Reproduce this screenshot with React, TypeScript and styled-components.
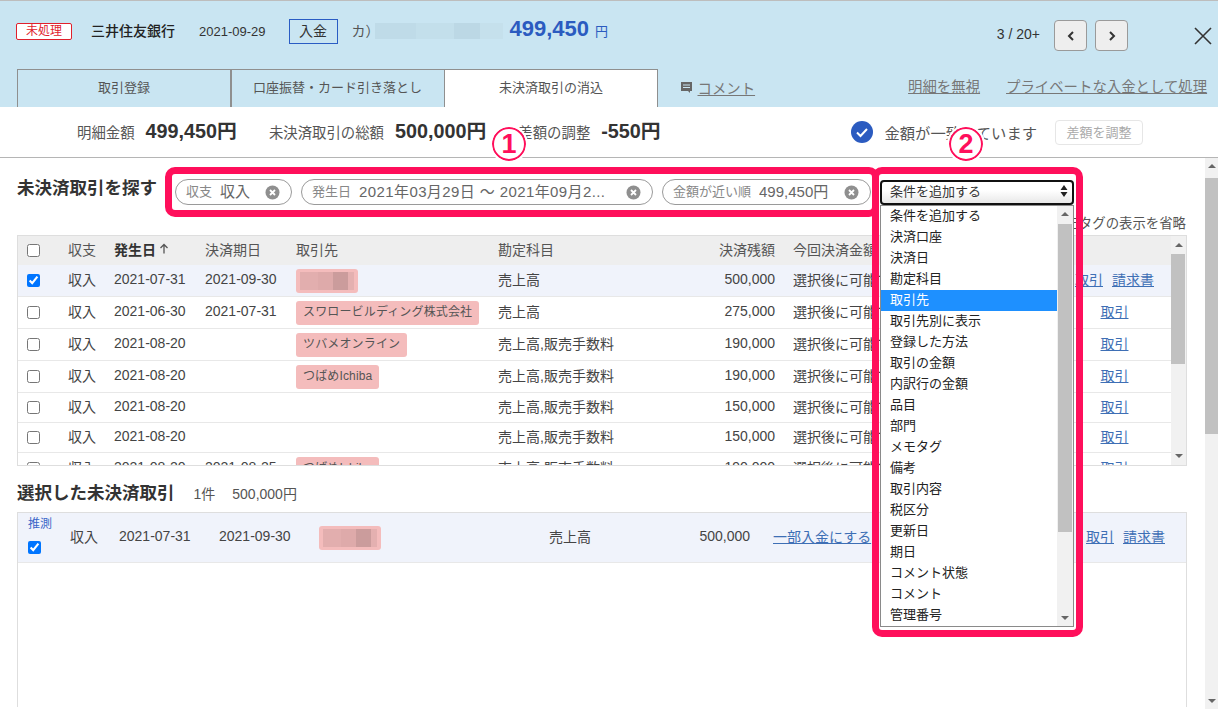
import styled, { createGlobalStyle } from 'styled-components';

const GlobalStyle = createGlobalStyle`
	html, body {
		margin: 0;
		padding: 0;
		background: #ffffff;
	}
	body {
		font-family: 'Liberation Sans', 'Noto Sans CJK JP', sans-serif;
		font-size: 13px;
		color: #444444;
	}
`;

const Page = styled.div`
	position: relative;
	width: 1218px;
	height: 709px;
	overflow: hidden;
	display: flex;
	flex-direction: column;
`;

const Header = styled.header`
	height: 107px;
	flex: none;
	box-sizing: border-box;
	border-top: 1px solid #bdbdbd;
	background: #c9e5f2;
	display: flex;
	flex-direction: column;
	justify-content: space-between;
`;

const InfoRow = styled.div`
	display: flex;
	align-items: center;
	height: 26px;
	margin-top: 17px;
	padding-left: 16px;
	color: #333333;
`;

const StatusBadge = styled.span`
	width: 56px;
	height: 17px;
	margin-top: 1px;
	box-sizing: border-box;
	border: 1px solid #e0202c;
	border-radius: 2px;
	background: #ffffff;
	color: #e0202c;
	font-size: 12px;
	line-height: 14px;
	text-align: center;
`;

const BankName = styled.span`
	margin-left: 19px;
	margin-bottom: 2px;
	font-size: 14px;
	font-weight: 500;
	color: #222222;
`;

const DateText = styled.span`
	margin-left: 24px;
	font-size: 13px;
`;

const TypeBox = styled.span`
	margin-left: 23px;
	width: 49px;
	height: 25px;
	box-sizing: border-box;
	border: 1px solid #2a5cc4;
	font-size: 14px;
	line-height: 22px;
	text-align: center;
`;

const Payer = styled.span`
	margin-left: 14px;
	margin-bottom: 2px;
	width: 23px;
	font-size: 14px;
	color: #555555;
`;

const PayerBlur = styled.span`
	width: 128px;
	height: 16px;
	background: linear-gradient(90deg, #bfdbe8 0 32%, #c3dfeb 32% 62%, #bcd8e5 62% 82%, #c5e0ec 82%);
`;

const Amount = styled.span`
	margin-left: 7px;
	margin-bottom: 4px;
	font-size: 22px;
	font-weight: 700;
	color: #2b5bc0;
`;

const AmountUnit = styled.span`
	margin-left: 6px;
	margin-bottom: 2px;
	font-size: 13px;
	color: #2b5bc0;
`;

const Pager = styled.div`
	margin-left: auto;
	align-self: flex-start;
	margin-top: 2px;
	display: flex;
	align-items: center;
	gap: 8px;
	padding-right: 4px;
`;

const PagerText = styled.span`
	margin-right: 6px;
	margin-bottom: 3px;
	font-size: 14px;
	color: #333333;
`;

const PagerButton = styled.button`
	width: 33px;
	height: 31px;
	padding: 0;
	display: flex;
	align-items: center;
	justify-content: center;
	border: 1px solid #9a9a9a;
	border-radius: 4px;
	background: #eeeeee;
`;

const CloseButton = styled.button`
	width: 22px;
	height: 22px;
	margin-left: 56px;
	margin-top: 1px;
	padding: 0;
	border: none;
	background: transparent;
	display: flex;
	align-items: center;
	justify-content: center;
`;

const TabRow = styled.div`
	display: flex;
	align-items: flex-start;
	height: 38px;
	padding-left: 17px;
`;

const Tab = styled.div<{ $active?: boolean }>`
	width: 214px;
	height: 38px;
	box-sizing: border-box;
	margin-right: -0.5px;
	border: 1px solid #8f8f8f;
	border-bottom: none;
	background: ${(props) => (props.$active ? '#ffffff' : 'transparent')};
	color: #555555;
	font-size: 13px;
	line-height: 36px;
	text-align: center;
`;

const CommentLink = styled.span`
	margin-left: 23px;
	height: 36px;
	display: flex;
	align-items: center;
	gap: 6px;
	font-size: 14.4px;
	color: #777777;
`;

const HeaderLink = styled.a<{ $left: number }>`
	margin-left: ${(props) => props.$left}px;
	height: 36px;
	line-height: 36px;
	font-size: 14.4px;
	color: #777777;
	text-decoration: underline;
	white-space: nowrap;
`;

const SummaryBar = styled.div`
	height: 50px;
	flex: none;
	border-bottom: 1px solid #b5b5b5;
	display: flex;
	align-items: center;
	padding-left: 77px;
`;

const SummaryLabel = styled.span<{ $left?: number }>`
	margin-left: ${(props) => props.$left ?? 0}px;
	margin-bottom: 2px;
	font-size: 14.4px;
	color: #555555;
`;

const SummaryValue = styled.span`
	margin-left: 11px;
	margin-bottom: 6px;
	font-size: 19.8px;
	font-weight: 700;
	color: #333333;
`;

const MatchStatus = styled.div`
	margin-left: auto;
	display: flex;
	align-items: center;
	padding-right: 75px;
`;

const MatchText = styled.span`
	margin-left: 11px;
	font-size: 15.3px;
	color: #555555;
`;

const AdjustButton = styled.button`
	width: 88px;
	height: 25px;
	margin-left: 18px;
	padding: 0 0 2px;
	border: 1px solid #e6e6e6;
	border-radius: 4px;
	background: #ffffff;
	color: #aaaaaa;
	font-family: inherit;
	font-size: 13px;
`;

const Body = styled.div`
	flex: 1;
	min-height: 0;
	display: flex;
`;

const Content = styled.main`
	width: 1170px;
	margin-left: 17px;
	display: flex;
	flex-direction: column;
`;

const PageScrollbar = styled.div`
	position: relative;
	width: 13px;
	margin-left: 18px;
	background: #f1f1f1;
`;

const PageThumb = styled.div`
	position: absolute;
	top: 20px;
	left: 0;
	right: 0;
	height: 256px;
	background: #c1c1c1;
`;

const SearchRow = styled.div`
	display: flex;
	align-items: flex-start;
	margin-top: 21px;
	height: 26px;
`;

const SectionTitle = styled.h2`
	margin: 0;
	font-size: 17.5px;
	font-weight: 700;
	line-height: 18px;
	color: #333333;
	white-space: nowrap;
`;

const ChipList = styled.div`
	display: flex;
	gap: 9px;
	margin-left: 18px;
`;

const Chip = styled.div<{ $width: number }>`
	width: ${(props) => props.$width}px;
	height: 26px;
	box-sizing: border-box;
	padding: 0 11px 0 10px;
	display: flex;
	align-items: center;
	border: 1px solid #9a9a9a;
	border-radius: 13px;
	background: #ffffff;
	white-space: nowrap;
`;

const ChipLabel = styled.span`
	margin-bottom: 3px;
	font-size: 13px;
	color: #888888;
`;

const ChipValue = styled.span<{ $spacing?: number }>`
	margin-left: 8px;
	margin-bottom: 3px;
	flex: 1;
	font-size: 15px;
	letter-spacing: ${(props) => props.$spacing ?? 0}px;
	color: #666666;
	overflow: hidden;
`;

const OptionRow = styled.div`
	height: 21px;
	margin-top: 9px;
	padding: 0 1px 0 0;
	display: flex;
	justify-content: flex-end;
	font-size: 13.4px;
	line-height: 19px;
	color: #555555;
`;

const TableFrame = styled.section`
	position: relative;
	height: 231px;
	flex: none;
	box-sizing: border-box;
	border: 1px solid #dedede;
	font-size: 14px;
	overflow: hidden;
`;

const gridColumns = '50px 46px 91px 91px 202px 170px 107px 1fr 111px';

const HeadRow = styled.div`
	height: 29px;
	padding-right: 15px;
	display: grid;
	grid-template-columns: ${gridColumns};
	align-items: center;
	background: #eeeeee;
	color: #555555;
`;

const Row = styled.div<{ $selected?: boolean; $compact?: boolean }>`
	height: ${(props) => (props.$compact ? 29 : 31)}px;
	padding-right: 15px;
	display: grid;
	grid-template-columns: ${gridColumns};
	align-items: center;
	border-bottom: 1px solid #e8e8e8;
	background: ${(props) => (props.$selected ? '#f0f3fb' : '#ffffff')};
	color: #444444;
	white-space: nowrap;
`;

const Cell = styled.span`
	padding-bottom: 4px;
`;

const CheckCell = styled.div`
	padding-left: 9px;
	display: flex;
	align-items: center;
`;

const Check = styled.input.attrs({ type: 'checkbox', readOnly: true })`
	width: 13px;
	height: 13px;
	margin: 0;
`;

const SortedHead = styled(Cell)`
	display: flex;
	align-items: center;
	gap: 3px;
	font-weight: 700;
	color: #333333;
`;

const NumberCell = styled(Cell)`
	text-align: right;
`;

const PendingCell = styled(Cell)`
	padding-left: 18px;
`;

const LinkCell = styled(Cell)`
	display: flex;
	justify-content: center;
	gap: 9px;
	padding-right: 2px;
`;

const RowLink = styled.a`
	font-size: 14px;
	color: #3e6fb5;
	text-decoration: underline;
`;

const PartnerChip = styled.span`
	display: inline-block;
	padding: 0 7px;
	height: 24px;
	line-height: 22px;
	border-radius: 3px;
	background: #f4bcbc;
	color: #555555;
	font-size: 12px;
	letter-spacing: 0.15px;
`;

const BlurChip = styled.span<{ $width: number }>`
	display: block;
	width: ${(props) => props.$width}px;
	height: 24px;
	box-sizing: border-box;
	padding: 3px 4px;
	border-radius: 3px;
	background: #f4bcbc;
`;

const BlurFill = styled.span`
	display: block;
	height: 100%;
	background: linear-gradient(90deg, #e2aeae 0 34%, #deaaaa 34% 62%, #cb9c9c 62% 88%, #e4b0b0 88%);
`;

const TableScrollbar = styled.div`
	position: absolute;
	top: 0;
	right: 0;
	bottom: 0;
	width: 15px;
	background: #f1f1f1;
`;

const TableThumb = styled.div`
	position: absolute;
	top: 18px;
	left: 0;
	right: 1px;
	height: 110px;
	background: #c1c1c1;
`;

const ArrowMark = styled.div<{ $down?: boolean; $offset: number }>`
	position: absolute;
	left: 50%;
	margin-left: -4px;
	${(props) => (props.$down ? 'bottom' : 'top')}: ${(props) => props.$offset}px;
	width: 0;
	height: 0;
	border-left: 4px solid transparent;
	border-right: 4px solid transparent;
	${(props) => (props.$down ? 'border-top' : 'border-bottom')}: 4px solid #666666;
`;

const SelectedHeading = styled.div`
	display: flex;
	align-items: baseline;
	height: 20px;
	margin-top: 17px;
`;

const SelectedMeta = styled.span<{ $left: number }>`
	margin-left: ${(props) => props.$left}px;
	font-size: 14px;
	color: #555555;
`;

const SelectedFrame = styled.section`
	flex: 1;
	margin-top: 9px;
	margin-bottom: 2px;
	border: 1px solid #dedede;
	border-bottom: none;
	font-size: 14px;
`;

const SelectedRow = styled.div`
	height: 49px;
	display: grid;
	grid-template-columns: 52px 49px 100px 100px 230px 90px 111px 1fr 111px;
	align-items: center;
	border-bottom: 1px solid #e8e8e8;
	background: #f0f3fb;
	color: #444444;
	white-space: nowrap;
`;

const GuessCell = styled.div`
	padding: 0 0 4px 10px;
	display: flex;
	flex-direction: column;
	gap: 10px;
	align-items: flex-start;
`;

const GuessLabel = styled.span`
	font-size: 12px;
	line-height: 14px;
	color: #3b66c8;
`;

const PartialCell = styled(Cell)`
	padding-left: 23px;
`;

const SelectedLinks = styled(Cell)`
	display: flex;
	gap: 9px;
	justify-content: flex-end;
	padding-right: 21px;
`;

/* annotation overlays drawn on top of the screenshot */
const Callout = styled.div<{ $left: number; $width: number; $height: number }>`
	position: absolute;
	left: ${(props) => props.$left}px;
	top: 167px;
	width: ${(props) => props.$width}px;
	height: ${(props) => props.$height}px;
	box-sizing: border-box;
	border: 7px solid #ff0f5b;
	border-radius: 10px;
	pointer-events: none;
`;

const Marker = styled.div<{ $left: number }>`
	position: absolute;
	left: ${(props) => props.$left}px;
	top: 127px;
	width: 34px;
	height: 34px;
	box-sizing: border-box;
	border: 2px solid #ff0f5b;
	border-radius: 50%;
	outline: 2px solid #ffffff;
	background: #ffffff;
	color: #ff0f5b;
	font-size: 27px;
	font-weight: 700;
	line-height: 30px;
	text-align: center;
`;

const SelectBox = styled.div`
	position: absolute;
	left: 880px;
	top: 180px;
	width: 194px;
	height: 25px;
	box-sizing: border-box;
	padding: 0 4px 4px 8px;
	display: flex;
	align-items: center;
	justify-content: space-between;
	border: 2px solid #111111;
	border-radius: 4px;
	background: linear-gradient(#ffffff 40%, #e8e8e8);
	color: #333333;
`;

const OptionList = styled.div`
	position: absolute;
	left: 880px;
	top: 205px;
	width: 194px;
	height: 422px;
	box-sizing: border-box;
	border: 1px solid #8a8a8a;
	background: #ffffff;
	overflow: hidden;
`;

const OptionItem = styled.div<{ $active?: boolean }>`
	width: 176px;
	height: 21px;
	padding-left: 9px;
	box-sizing: border-box;
	background: ${(props) => (props.$active ? '#1e90ff' : 'transparent')};
	color: ${(props) => (props.$active ? '#ffffff' : '#222222')};
	line-height: 20px;
`;

const ListScrollbar = styled.div`
	position: absolute;
	top: 0;
	right: 0;
	bottom: 0;
	width: 16px;
	background: #f1f1f1;
`;

const ListThumb = styled.div`
	position: absolute;
	top: 18px;
	left: 1px;
	right: 1px;
	height: 308px;
	background: #c1c1c1;
`;

type Deal = {
	issued: string;
	due?: string;
	partner?: string;
	blur?: boolean;
	account: string;
	balance: string;
	invoice?: boolean;
	checked?: boolean;
};

const deals: Deal[] = [
	{ issued: '2021-07-31', due: '2021-09-30', blur: true, account: '売上高', balance: '500,000', invoice: true, checked: true },
	{ issued: '2021-06-30', due: '2021-07-31', partner: 'スワロービルディング株式会社', account: '売上高', balance: '275,000' },
	{ issued: '2021-08-20', partner: 'ツバメオンライン', account: '売上高,販売手数料', balance: '190,000' },
	{ issued: '2021-08-20', partner: 'つばめIchiba', account: '売上高,販売手数料', balance: '190,000' },
	{ issued: '2021-08-20', account: '売上高,販売手数料', balance: '150,000' },
	{ issued: '2021-08-20', account: '売上高,販売手数料', balance: '150,000' },
	{ issued: '2021-08-20', due: '2021-08-25', partner: 'つばめIchiba', account: '売上高,販売手数料', balance: '190,000' },
];

const conditions = ['条件を追加する', '決済口座', '決済日', '勘定科目', '取引先', '取引先別に表示', '登録した方法', '取引の金額', '内訳行の金額', '品目', '部門', 'メモタグ', '備考', '取引内容', '税区分', '更新日', '期日', 'コメント状態', 'コメント', '管理番号'];

const ClearIcon = () => (
	<svg width='15' height='15' viewBox='0 0 15 15'>
		<circle cx='7.5' cy='7.5' r='7' fill='#8f8f8f' />
		<path d='M5 5l5 5M10 5l-5 5' stroke='#ffffff' strokeWidth='1.8' />
	</svg>
);

const Chevron = ({ left }: { left?: boolean }) => (
	<svg width='10' height='12' viewBox='0 0 10 12'>
		<path d={left ? 'M7 2L3 6l4 4' : 'M3 2l4 4-4 4'} fill='none' stroke='#333333' strokeWidth='2' />
	</svg>
);

export default function App() {
	return (
		<Page>
			<GlobalStyle />
			<Header>
				<InfoRow>
					<StatusBadge>未処理</StatusBadge>
					<BankName>三井住友銀行</BankName>
					<DateText>2021-09-29</DateText>
					<TypeBox>入金</TypeBox>
					<Payer>カ）</Payer>
					<PayerBlur />
					<Amount>499,450</Amount>
					<AmountUnit>円</AmountUnit>
					<Pager>
						<PagerText>3 / 20+</PagerText>
						<PagerButton>
							<Chevron left />
						</PagerButton>
						<PagerButton>
							<Chevron />
						</PagerButton>
						<CloseButton>
							<svg width='20' height='20' viewBox='0 0 20 20'>
								<path d='M2 2l16 16M18 2L2 18' stroke='#333333' strokeWidth='1.6' />
							</svg>
						</CloseButton>
					</Pager>
				</InfoRow>
				<TabRow>
					<Tab>取引登録</Tab>
					<Tab>口座振替・カード引き落とし</Tab>
					<Tab $active>未決済取引の消込</Tab>
					<CommentLink>
						<svg width='11' height='11' viewBox='0 0 11 11'>
							<path d='M0 0h11v9H9v2L7 9H0z' fill='#666666' />
							<path d='M2 3h7M2 5.5h7' stroke='#c9e5f2' strokeWidth='1' />
						</svg>
						<u>コメント</u>
					</CommentLink>
					<HeaderLink $left={153}>明細を無視</HeaderLink>
					<HeaderLink $left={26}>プライベートな入金として処理</HeaderLink>
				</TabRow>
			</Header>
			<SummaryBar>
				<SummaryLabel>明細金額</SummaryLabel>
				<SummaryValue>499,450円</SummaryValue>
				<SummaryLabel $left={32}>未決済取引の総額</SummaryLabel>
				<SummaryValue>500,000円</SummaryValue>
				<SummaryLabel $left={32}>差額の調整</SummaryLabel>
				<SummaryValue>-550円</SummaryValue>
				<MatchStatus>
					<svg width='22' height='22' viewBox='0 0 22 22'>
						<circle cx='11' cy='11' r='11' fill='#2b5bc0' />
						<path d='M6 11.5l3.5 3.5L16 8' fill='none' stroke='#ffffff' strokeWidth='2' />
					</svg>
					<MatchText>金額が一致しています</MatchText>
					<AdjustButton>差額を調整</AdjustButton>
				</MatchStatus>
			</SummaryBar>
			<Body>
				<Content>
					<SearchRow>
						<SectionTitle>未決済取引を探す</SectionTitle>
						<ChipList>
							<Chip $width={117}>
								<ChipLabel>収支</ChipLabel>
								<ChipValue>収入</ChipValue>
								<ClearIcon />
							</Chip>
							<Chip $width={352}>
								<ChipLabel>発生日</ChipLabel>
								<ChipValue $spacing={0.4}>2021年03月29日 ～ 2021年09月2...</ChipValue>
								<ClearIcon />
							</Chip>
							<Chip $width={209}>
								<ChipLabel>金額が近い順</ChipLabel>
								<ChipValue>499,450円</ChipValue>
								<ClearIcon />
							</Chip>
						</ChipList>
					</SearchRow>
					<OptionRow>メモタグの表示を省略</OptionRow>
					<TableFrame>
						<HeadRow>
							<CheckCell>
								<Check />
							</CheckCell>
							<Cell>収支</Cell>
							<SortedHead>
								発生日
								<svg width='10' height='11' viewBox='0 0 10 11'>
									<path d='M5 10.5V1.5M1.5 5L5 1.5 8.5 5' fill='none' stroke='#555555' strokeWidth='1.3' />
								</svg>
							</SortedHead>
							<Cell>決済期日</Cell>
							<Cell>取引先</Cell>
							<Cell>勘定科目</Cell>
							<NumberCell>決済残額</NumberCell>
							<PendingCell>今回決済金額</PendingCell>
							<span />
						</HeadRow>
						{deals.map((deal, index) => (
							<Row key={index} $selected={deal.checked} $compact={!deal.partner && !deal.blur}>
								<CheckCell>
									<Check defaultChecked={deal.checked} />
								</CheckCell>
								<Cell>収入</Cell>
								<Cell>{deal.issued}</Cell>
								<Cell>{deal.due}</Cell>
								<div>
									{deal.blur ? (
										<BlurChip $width={62}>
											<BlurFill />
										</BlurChip>
									) : (
										deal.partner && <PartnerChip>{deal.partner}</PartnerChip>
									)}
								</div>
								<Cell>{deal.account}</Cell>
								<NumberCell>{deal.balance}</NumberCell>
								<PendingCell>選択後に可能です</PendingCell>
								<LinkCell>
									<RowLink>取引</RowLink>
									{deal.invoice && <RowLink>請求書</RowLink>}
								</LinkCell>
							</Row>
						))}
						<TableScrollbar>
							<ArrowMark $offset={7} />
							<TableThumb />
							<ArrowMark $down $offset={7} />
						</TableScrollbar>
					</TableFrame>
					<SelectedHeading>
						<SectionTitle>選択した未決済取引</SectionTitle>
						<SelectedMeta $left={19}>1件</SelectedMeta>
						<SelectedMeta $left={17}>500,000円</SelectedMeta>
					</SelectedHeading>
					<SelectedFrame>
						<SelectedRow>
							<GuessCell>
								<GuessLabel>推測</GuessLabel>
								<Check defaultChecked />
							</GuessCell>
							<Cell>収入</Cell>
							<Cell>2021-07-31</Cell>
							<Cell>2021-09-30</Cell>
							<div>
								<BlurChip $width={62}>
									<BlurFill />
								</BlurChip>
							</div>
							<Cell>売上高</Cell>
							<NumberCell>500,000</NumberCell>
							<PartialCell>
								<RowLink>一部入金にする</RowLink>
							</PartialCell>
							<SelectedLinks>
								<RowLink>取引</RowLink>
								<RowLink>請求書</RowLink>
							</SelectedLinks>
						</SelectedRow>
					</SelectedFrame>
				</Content>
				<PageScrollbar>
					<ArrowMark $offset={6} />
					<PageThumb />
					<ArrowMark $down $offset={6} />
				</PageScrollbar>
			</Body>

			<Callout $left={165} $width={714} $height={50} />
			<Callout $left={872} $width={211} $height={470} />
			<Marker $left={492}>1</Marker>
			<Marker $left={949}>2</Marker>
			<SelectBox>
				条件を追加する
				<svg width='8' height='14' viewBox='0 0 8 14'>
					<path d='M4 1l3.5 5h-7zM4 13L.5 8h7z' fill='#222222' />
				</svg>
			</SelectBox>
			<OptionList>
				{conditions.map((label) => (
					<OptionItem key={label} $active={label === '取引先'}>
						{label}
					</OptionItem>
				))}
				<ListScrollbar>
					<ArrowMark $offset={6} />
					<ListThumb />
					<ArrowMark $down $offset={6} />
				</ListScrollbar>
			</OptionList>
		</Page>
	);
}
